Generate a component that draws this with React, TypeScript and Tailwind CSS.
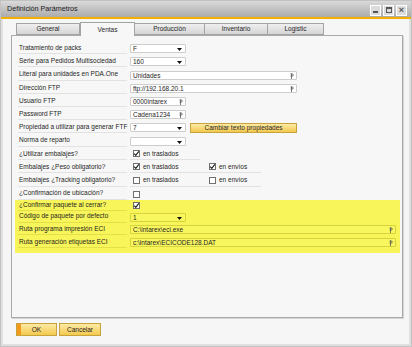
import React from "react";

const tabs = [
  { label: "General", w: "w-[64px]" },
  { label: "Ventas", w: "w-[55px]", active: true },
  { label: "Producción", w: "w-[70px]" },
  { label: "Inventario", w: "w-[63px]" },
  { label: "Logistic", w: "w-[56px]" },
];

function Arrow() {
  return (
    <svg width="5" height="3" viewBox="0 0 5 3" className="absolute right-[3px] top-[3px]">
      <path d="M0 0h5L2.5 3z" fill="#111" />
    </svg>
  );
}

function LinkIcon() {
  return (
    <svg width="4" height="6" viewBox="0 0 4 6" className="absolute right-[2px] top-[1px]">
      <path d="M1.5 0.5v5.5M0.5 1h1.8a1 1 0 0 1 0 2H0.5" stroke="#555" strokeWidth="0.8" fill="none" />
    </svg>
  );
}

function Check({ on }: { on?: boolean }) {
  return (
    <span className="relative block w-[7px] h-[7px] border border-[#707070] bg-white shrink-0">
      {on && (
        <svg width="7" height="7" viewBox="0 0 7 7" className="absolute -left-[1px] -top-[1px]">
          <path d="M1.2 3.6l1.6 1.7L5.8 1.4" stroke="#1a1a1a" strokeWidth="1.1" fill="none" />
        </svg>
      )}
    </span>
  );
}

function Select({ value, yellow }: { value?: string; yellow?: boolean }) {
  return (
    <div
      className={
        "relative w-[56px] h-[9px] border rounded-[1px] pl-[2px] leading-[8px] " +
        (yellow ? "bg-[#f9f760] border-[#d7d33c]" : "bg-white border-[#cdcdcd]")
      }
    >
      {value}
      <Arrow />
    </div>
  );
}

function Field({ value, w, yellow }: { value: string; w: string; yellow?: boolean }) {
  return (
    <div
      className={
        "relative h-[9px] border rounded-[1px] pl-[2px] leading-[8px] " +
        w +
        (yellow ? " bg-[#f9f760] border-[#d7d33c]" : " bg-white border-[#cdcdcd]")
      }
    >
      {value}
      <LinkIcon />
    </div>
  );
}

function Row({
  label,
  h,
  yellow,
  children,
}: {
  label: string;
  h: string;
  yellow?: boolean;
  children?: React.ReactNode;
}) {
  return (
    <div className={"flex items-center pl-[3px] " + h}>
      <div
        className={
          "w-[109px] shrink-0 whitespace-nowrap mr-[3px] pl-[1px] pb-[1px] border-b " +
          (yellow ? "border-[#e4e04a]" : "border-[#e2e2e2]")
        }
      >
        {label}
      </div>
      {children}
    </div>
  );
}

function CheckGroup({ on, text, w }: { on?: boolean; text: string; w: string }) {
  return (
    <div className={"flex items-center gap-[3px] pl-[3px] pb-[1px] border-b border-[#e2e2e2] " + w}>
      <Check on={on} />
      <span>{text}</span>
    </div>
  );
}

export default function App() {
  return (
    <div className="w-[412px] h-[347px] flex flex-col bg-[#f4f4f4] border border-[#c2c2c2] text-[6.5px] text-[#1e1e1e] font-['Liberation_Sans',Arial,sans-serif]">
      {/* Title bar */}
      <div className="h-[16px] flex items-center justify-between pl-[6px] pr-[4px] bg-gradient-to-b from-[#dadada] to-[#acacac]">
        <span className="text-[7.2px] text-[#1a1a1a]">Definición Parámetros</span>
        <div className="flex gap-[2px] mt-[2px]">
          <span className="w-[11px] h-[11px] border border-white bg-[#dcdcdc] flex items-end justify-center pb-[2px]">
            <span className="w-[5px] h-[1.5px] bg-[#555]" />
          </span>
          <span className="w-[11px] h-[11px] border border-white bg-[#dcdcdc] flex items-center justify-center">
            <span className="w-[6px] h-[6px] border border-[#555] border-t-2" />
          </span>
          <span className="w-[11px] h-[11px] border border-white bg-[#dcdcdc] flex items-center justify-center text-[9px] leading-none font-bold text-[#555]">
            ×
          </span>
        </div>
      </div>
      <div className="h-[2px] bg-[#f2b100]" />

      {/* Body */}
      <div className="flex-1 flex flex-col pl-[8px] pr-[6px] pt-[3px] bg-[#f6f6f6] border-x-2 border-b-2 border-[#e0e0e0]">
        {/* Tabs */}
        <div className="flex items-end h-[13px] pl-[5px] relative z-10">
          {tabs.map((t) =>
            t.active ? (
              <div
                key={t.label}
                className={
                  t.w +
                  " h-[14px] -mb-[1px] flex items-center justify-center bg-[#f7f7f7] border border-b-0 border-[#a4a4a4]"
                }
              >
                {t.label}
              </div>
            ) : (
              <div
                key={t.label}
                className={
                  t.w +
                  " h-[12px] flex items-center justify-center bg-gradient-to-b from-[#efefef] to-[#d6d6d6] border border-l-0 first:border-l border-[#a4a4a4]"
                }
              >
                {t.label}
              </div>
            )
          )}
        </div>

        {/* Panel */}
        <div className="h-[283px] bg-[#f7f7f7] border border-[#a9a9a9] shadow-[1px_1px_0_#d4d4d4] pt-[6px] pl-[3px] pr-[2px]">
          <Row label="Tratamiento de packs" h="h-[13px]">
            <Select value="F" />
          </Row>
          <Row label="Serie para Pedidos Multisociedad" h="h-[13px]">
            <Select value="160" />
          </Row>
          <Row label="Literal para unidades en PDA.One" h="h-[14px]">
            <Field value="Unidades" w="w-[167px]" />
          </Row>
          <Row label="Dirección FTP" h="h-[13px]">
            <Field value="ftp://192.168.20.1" w="w-[167px]" />
          </Row>
          <Row label="Usuario FTP" h="h-[13px]">
            <Field value="0000intarex" w="w-[56px]" />
          </Row>
          <Row label="Password FTP" h="h-[13px]">
            <Field value="Cadena1234" w="w-[56px]" />
          </Row>
          <Row label="Propiedad a utilizar para generar FTF" h="h-[13px]">
            <Select value="7" />
            <div className="ml-[4px] w-[107px] h-[10px] flex items-center justify-center border border-[#c6a33c] bg-gradient-to-b from-[#fdeaa3] to-[#f3c94a] text-[#2a2a2a]">
              Cambiar texto propiedades
            </div>
          </Row>
          <Row label="Norma de reparto" h="h-[14px]">
            <Select />
          </Row>
          <Row label="¿Utilizar embalajes?" h="h-[13px]">
            <CheckGroup on text="en traslados" w="w-[70px]" />
          </Row>
          <Row label="Embalajes ¿Peso obligatorio?" h="h-[13px]">
            <CheckGroup on text="en traslados" w="w-[76px]" />
            <CheckGroup on text="en envíos" w="w-[55px]" />
          </Row>
          <Row label="Embalajes ¿Tracking obligatorio?" h="h-[14px]">
            <CheckGroup text="en traslados" w="w-[76px]" />
            <CheckGroup text="en envíos" w="w-[55px]" />
          </Row>
          <Row label="¿Confirmación de ubicación?" h="h-[12px]">
            <div className="pl-[3px]">
              <Check />
            </div>
          </Row>

          {/* Highlighted block */}
          <div className="bg-[#f8f55a] pb-[4px]">
            <Row label="¿Confirmar paquete al cerrar?" h="h-[11px]" yellow>
              <div className="pl-[3px]">
                <Check on />
              </div>
            </Row>
            <Row label="Código de paquete por defecto" h="h-[12px]" yellow>
              <Select value="1" yellow />
            </Row>
            <Row label="Ruta programa impresión ECI" h="h-[13px]" yellow>
              <Field value="C:\intarex\eci.exe" w="w-[266px]" yellow />
            </Row>
            <Row label="Ruta generación etiquetas ECI" h="h-[13px]" yellow>
              <Field value="c:\intarex\ECICODE128.DAT" w="w-[266px]" yellow />
            </Row>
          </div>
        </div>

        {/* Footer buttons */}
        <div className="flex gap-[2px] mt-[5px] pl-[5px]">
          <div className="relative w-[41px] h-[13px] flex items-center justify-center border border-[#c6a33c] bg-gradient-to-b from-[#fdeaa3] to-[#f3c94a]">
            <span className="absolute left-0 top-0 bottom-0 w-[4px] bg-[#f29a1c]" />
            OK
          </div>
          <div className="w-[42px] h-[13px] flex items-center justify-center border border-[#c6a33c] bg-gradient-to-b from-[#fdeaa3] to-[#f3c94a]">
            Cancelar
          </div>
        </div>
      </div>
    </div>
  );
}
